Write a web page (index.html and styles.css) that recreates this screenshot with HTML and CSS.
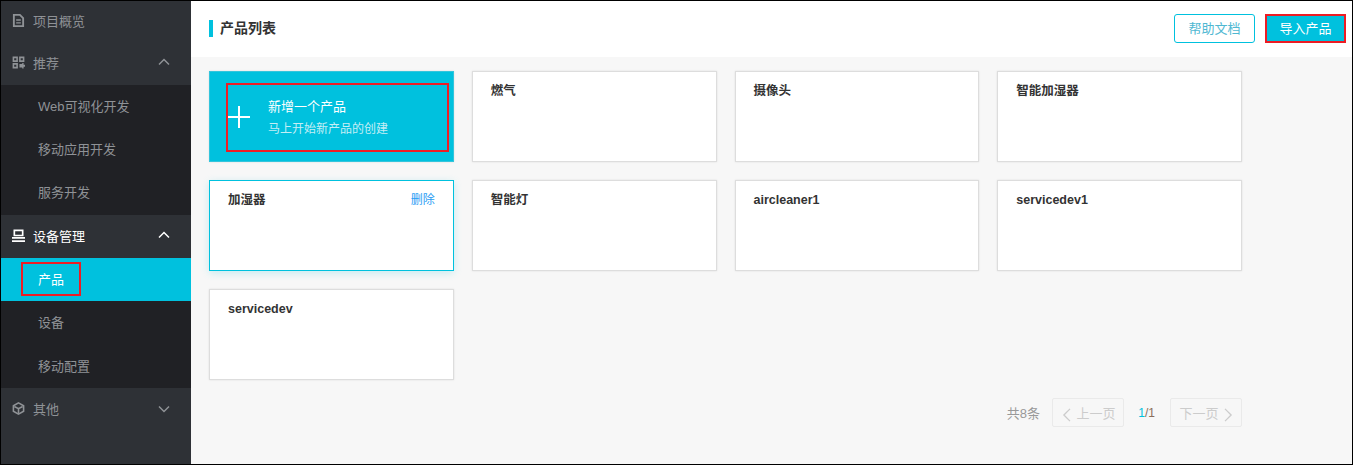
FILE: index.html
```html
<!DOCTYPE html>
<html lang="en">
<head>
    <meta charset="UTF-8">
    <title>产品列表</title>
    <link rel="stylesheet" href="styles.css">
</head>
<body>
    <div class="frame">
        <aside class="sidebar">
            <div class="menu-item">
                <svg class="menu-icon" viewBox="0 0 14 14"><path d="M2 1h6.500L12 4.500V13H2z" fill="none" stroke="currentColor" stroke-width="2"/><path d="M4.500 6.500h5M4.500 9.500h5" stroke="currentColor" stroke-width="1.500"/></svg>
                <span>项目概览</span>
            </div>
            <div class="menu-item">
                <svg class="menu-icon" viewBox="0 0 14 14"><path d="M1.500 1.500h4v4h-4zM8.500 1.500h4v4h-4zM1.500 8.500h4v4h-4z" fill="none" stroke="currentColor" stroke-width="1.700"/><path d="M8 8.500h3V7.500h1.500v2H14v2h-1.500v2H11v-1H8z" fill="currentColor"/></svg>
                <span>推荐</span>
                <svg class="arrow" viewBox="0 0 12 8"><path d="M1 6.500l5-5 5 5" fill="none" stroke="currentColor" stroke-width="1.500"/></svg>
            </div>
            <div class="submenu">
                <div class="sub-item">Web可视化开发</div>
                <div class="sub-item">移动应用开发</div>
                <div class="sub-item">服务开发</div>
            </div>
            <div class="menu-item active">
                <svg class="menu-icon" viewBox="0 0 14 14"><path d="M2.500 1.500h9v5.500h-9z" fill="none" stroke="currentColor" stroke-width="1.800"/><path d="M0 8.500h14v2H0zM0 12h14v2H0z" fill="currentColor"/></svg>
                <span>设备管理</span>
                <svg class="arrow" viewBox="0 0 12 8"><path d="M1 6.500l5-5 5 5" fill="none" stroke="currentColor" stroke-width="1.500"/></svg>
            </div>
            <div class="submenu">
                <div class="sub-item current">产品<i class="mark mark-nav"></i></div>
                <div class="sub-item">设备</div>
                <div class="sub-item">移动配置</div>
            </div>
            <div class="menu-item">
                <svg class="menu-icon" viewBox="0 0 14 14"><path d="M7 1l5.500 3v6L7 13l-5.500-3V4z" fill="none" stroke="currentColor" stroke-width="1.700"/><path d="M2.500 4.800L7 7.200l4.500-2.400M7 7.200v5" fill="none" stroke="currentColor" stroke-width="1.700"/></svg>
                <span>其他</span>
                <svg class="arrow" viewBox="0 0 12 8"><path d="M1 1.500l5 5 5-5" fill="none" stroke="currentColor" stroke-width="1.500"/></svg>
            </div>
        </aside>
        <main class="content">
            <header class="topbar">
                <h1 class="title">产品列表</h1>
                <div class="actions">
                    <button class="btn btn-outline">帮助文档</button>
                    <button class="btn btn-primary">导入产品<i class="mark mark-btn"></i></button>
                </div>
            </header>
            <section class="products">
                <div class="grid">
                    <div class="card card-add">
                        <svg class="plus" viewBox="0 0 22 22"><path d="M11 0v22M0 11h22" stroke="#fff" stroke-width="2"/></svg>
                        <div class="add-text">
                            <div class="add-title">新增一个产品</div>
                            <div class="add-sub">马上开始新产品的创建</div>
                        </div>
                        <i class="mark mark-card"></i>
                    </div>
                    <div class="card">燃气</div>
                    <div class="card">摄像头</div>
                    <div class="card">智能加湿器</div>
                    <div class="card card-hover">加湿器<a class="delete">删除</a></div>
                    <div class="card">智能灯</div>
                    <div class="card">aircleaner1</div>
                    <div class="card">servicedev1</div>
                    <div class="card">servicedev</div>
                </div>
                <div class="pager">
                    <span class="total">共8条</span>
                    <span class="page-btn page-prev">
                        <svg class="chevron" viewBox="0 0 10 16"><path d="M9 1L2 8l7 7" fill="none" stroke="currentColor" stroke-width="1.500"/></svg>上一页
                    </span>
                    <span class="page-num"><b>1</b>/1</span>
                    <span class="page-btn">下一页
                        <svg class="chevron" viewBox="0 0 10 16"><path d="M1 1l7 7-7 7" fill="none" stroke="currentColor" stroke-width="1.500"/></svg>
                    </span>
                </div>
            </section>
        </main>
    </div>
</body>
</html>
```

FILE: styles.css
```css
* {
    box-sizing: border-box;
    margin: 0;
    padding: 0;
    font-family: "Liberation Sans", "Noto Sans CJK SC", sans-serif;
}
html, body {
    height: 100%;
    overflow: hidden;
}
.frame {
    display: flex;
    height: 465px;
    border: 1px solid #000;
    background-color: #f7f7f7;
}
.sidebar {
    width: 190px;
    flex-shrink: 0;
    background-color: #2e3136;
    color: #8f9296;
    font-size: 13px;
}
.menu-item {
    display: flex;
    align-items: center;
    height: 43.3px;
    padding: 0 21px 2px 11px;
}
.menu-item:first-child {
    height: 40.5px;
}
.menu-item.active {
    color: #fff;
}
.menu-icon {
    width: 13px;
    height: 13px;
    margin-right: 8px;
}
.arrow {
    width: 12px;
    height: 8px;
    margin-left: auto;
}
.submenu {
    background-color: #202125;
}
.sub-item {
    position: relative;
    height: 43.3px;
    line-height: 43.3px;
    padding-left: 37px;
}
.sub-item.current {
    background-color: #00c1de;
    color: #fff;
}
.mark {
    position: absolute;
    border: 2px solid #ed1c24;
    pointer-events: none;
}
.mark-nav {
    left: 20px;
    top: 4px;
    width: 60px;
    height: 34px;
}
.mark-btn {
    left: -1px;
    top: -1px;
    right: -1px;
    bottom: -1px;
}
.mark-card {
    left: 16px;
    top: 11px;
    width: 223px;
    height: 69px;
}
.content {
    flex: 1;
    min-width: 0;
}
.topbar {
    display: flex;
    justify-content: space-between;
    align-items: center;
    height: 56px;
    padding: 0 6px 1px 18px;
    background-color: #fff;
}
.title {
    border-left: 4px solid #00c1de;
    padding-left: 7px;
    font-size: 14px;
    line-height: 17px;
    font-weight: bold;
    color: #333;
}
.actions {
    display: flex;
    gap: 10px;
}
.btn {
    position: relative;
    width: 81px;
    height: 29px;
    padding-bottom: 2px;
    border: 1px solid #00c1de;
    border-radius: 3px;
    font-size: 13px;
    background-color: #fff;
    color: #4fb8d2;
}
.btn-primary {
    border-radius: 0;
    background-color: #00c1de;
    color: #fff;
}
.products {
    padding: 14px 0 0 18px;
    width: 1051px;
}
.grid {
    display: grid;
    grid-template-columns: repeat(4, 1fr);
    grid-auto-rows: 91px;
    gap: 18px;
}
.card {
    position: relative;
    padding: 10px 18px;
    background-color: #fff;
    border: 1px solid #ddd;
    box-shadow: 0 0 2px rgba(0,0,0,0.1);
    font-size: 12.5px;
    line-height: 18px;
    font-weight: bold;
    color: #333;
}
.card-add {
    display: flex;
    align-items: center;
    gap: 18px;
    padding: 0 0 0 18px;
    background-color: #00c1de;
    border-color: #33c5dc;
    font-weight: normal;
    color: #fff;
}
.plus {
    width: 22px;
    height: 22px;
}
.add-text {
    padding-top: 3px;
}
.add-title {
    font-size: 13px;
    line-height: 20px;
}
.add-sub {
    margin-top: 2px;
    font-size: 12px;
    line-height: 20px;
    color: #c5eef5;
}
.card-hover {
    border-color: #00c1de;
    box-shadow: 0 2px 8px rgba(0,193,222,0.2);
}
.delete {
    position: absolute;
    right: 18px;
    top: 10px;
    font-weight: normal;
    font-size: 12px;
    color: #2a9df4;
}
.pager {
    display: flex;
    justify-content: flex-end;
    align-items: center;
    margin-top: 18px;
    height: 29px;
    font-size: 13px;
    color: #999;
}
.page-btn {
    display: flex;
    align-items: center;
    justify-content: center;
    gap: 5px;
    width: 72px;
    height: 29px;
    margin-left: 12px;
    border: 1px solid #eaeaea;
    border-radius: 2px;
    font-size: 13px;
    color: #ccc;
}
.page-prev {
    padding-left: 2px;
}
.chevron {
    width: 9px;
    height: 14px;
    margin-top: 4px;
}
.page-num {
    margin: 0 3px;
    width: 28px;
    text-align: right;
    font-size: 12px;
    color: #8a6d5a;
}
.page-num b {
    font-weight: normal;
    color: #00c1de;
}
```
